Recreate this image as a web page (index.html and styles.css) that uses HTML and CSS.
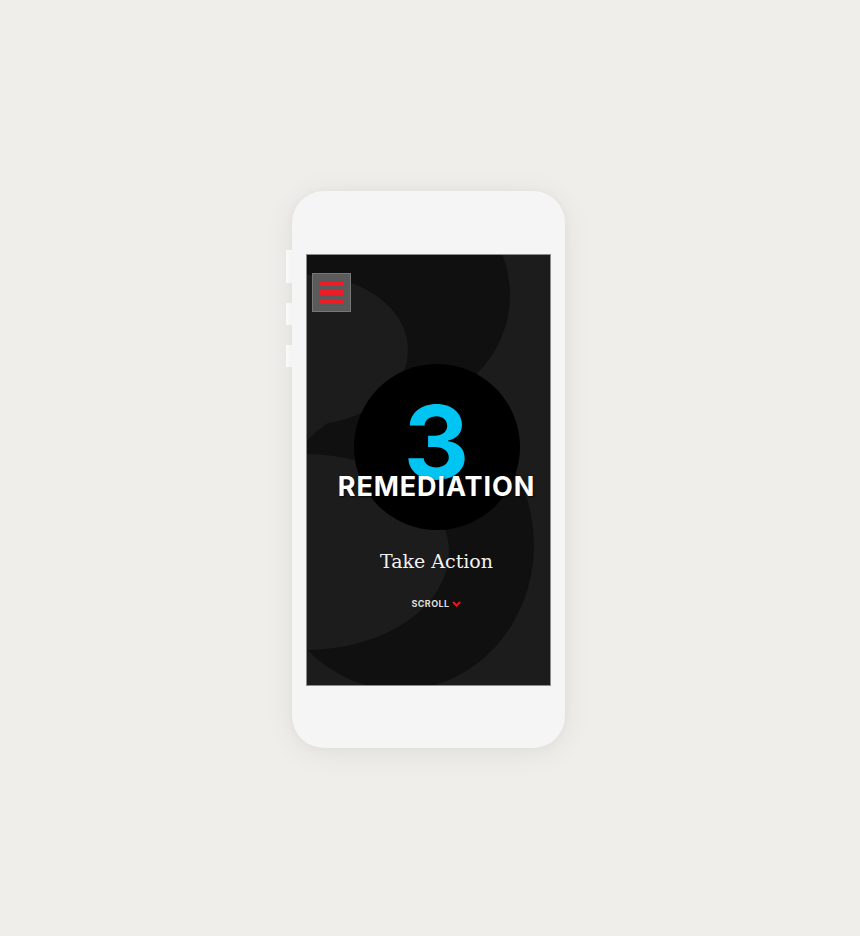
FILE: index.html
```html
<!DOCTYPE html>
<html lang="en">
<head>
<meta charset="utf-8">
<title>Remediation</title>
<link rel="stylesheet" href="styles.css">
</head>
<body>
<div class="stage">
  <div class="side-buttons">
    <span class="side-btn side-btn--long"></span>
    <span class="side-btn"></span>
    <span class="side-btn"></span>
  </div>
  <div class="phone">
    <div class="screen">
      <svg class="screen-bg" width="245" height="432" viewBox="0 0 245 432" aria-hidden="true">
        <rect width="245" height="432" fill="#1c1c1c"/>
        <circle cx="94" cy="41" r="110" fill="#101010"/>
        <ellipse cx="94" cy="291" rx="134" ry="145" fill="#101010"/>
        <ellipse cx="0" cy="96" rx="102" ry="75" fill="#1c1c1c"/>
        <ellipse cx="0" cy="298" rx="143" ry="98" fill="#1c1c1c"/>
      </svg>
      <div class="screen-content">
        <button class="menu-btn" aria-label="Menu">
          <span class="menu-line"></span>
          <span class="menu-line"></span>
          <span class="menu-line"></span>
        </button>
        <div class="hero">
          <div class="badge">
            <span class="badge-num">3</span>
            <h1 class="badge-title">REMEDIATION</h1>
          </div>
          <p class="subtitle">Take Action</p>
          <div class="scroll">
            <span class="scroll-label">SCROLL</span>
            <svg class="scroll-chev" width="9" height="6" viewBox="0 0 9 6" aria-hidden="true">
              <path d="M1 1 L4.5 4.5 L8 1" fill="none" stroke="#e8141f" stroke-width="2"/>
            </svg>
          </div>
        </div>
      </div>
    </div>
  </div>
</div>
</body>
</html>
```
FILE: styles.css
```css
* { box-sizing: border-box; }
html, body { margin: 0; padding: 0; }
body {
  background: #efeeea;
  width: 860px;
  height: 936px;
  overflow: hidden;
}
.stage {
  display: flex;
  padding: 191px 0 0 286px;
}
.side-buttons {
  width: 6px;
  display: flex;
  flex-direction: column;
  gap: 20px;
  padding-top: 59px;
}
.side-btn {
  display: block;
  width: 6px;
  height: 22px;
  background: #ffffff;
}
.side-btn--long { height: 33px; }
.phone {
  width: 273px;
  height: 557px;
  background: #f5f5f5;
  border-radius: 32px;
  box-shadow: 0 4px 30px rgba(0,0,0,0.07), 0 0 8px rgba(0,0,0,0.03);
  padding: 63px 14px 0 14px;
}
.screen {
  position: relative;
  width: 245px;
  height: 432px;
  border: 1px solid #8c8c8c;
  overflow: hidden;
  background: #1c1c1c;
}
.screen-bg {
  position: absolute;
  left: -1px;
  top: -1px;
}
.screen-content {
  position: relative;
  display: flex;
  flex-direction: column;
  height: 100%;
}
.menu-btn {
  margin: 18px 0 0 5px;
  width: 39px;
  height: 39px;
  padding: 8px 6px;
  background: #5b5b5b;
  border: 1px solid #777;
  display: flex;
  flex-direction: column;
  gap: 4px;
  cursor: pointer;
}
.menu-line {
  display: block;
  width: 24px;
  height: 5px;
  background: #ee1c26;
}
.hero {
  display: flex;
  flex-direction: column;
  align-items: center;
  padding-left: 16px;
  margin-top: 52px;
}
.badge {
  width: 166px;
  height: 166px;
  border-radius: 50%;
  background: #000;
  display: flex;
  flex-direction: column;
  align-items: center;
}
.badge-num {
  font-family: "Inter", "DejaVu Sans", sans-serif;
  font-weight: 700;
  font-size: 102px;
  line-height: 70px;
  height: 70px;
  color: #00c4f2;
  margin-top: 43px;
}
.badge-title {
  margin: -2px 0 0 0;
  font-family: "Inter", "DejaVu Sans", sans-serif;
  font-weight: 700;
  font-size: 27px;
  line-height: 24px;
  letter-spacing: 0.9px;
  color: #fff;
  white-space: nowrap;
  text-shadow: 1px 1px 2px rgba(0,0,0,0.7);
}
.subtitle {
  margin: 18px 0 0 0;
  font-family: "DejaVu Serif", serif;
  font-size: 19px;
  line-height: 26px;
  color: #f2f2f2;
}
.scroll {
  margin-top: 25px;
  display: flex;
  align-items: center;
  gap: 3px;
}
.scroll-label {
  font-family: "Inter", "DejaVu Sans", sans-serif;
  font-weight: 700;
  font-size: 9px;
  line-height: 10px;
  color: #dedede;
  letter-spacing: 0.4px;
}
.scroll-chev { display: block; }
```
